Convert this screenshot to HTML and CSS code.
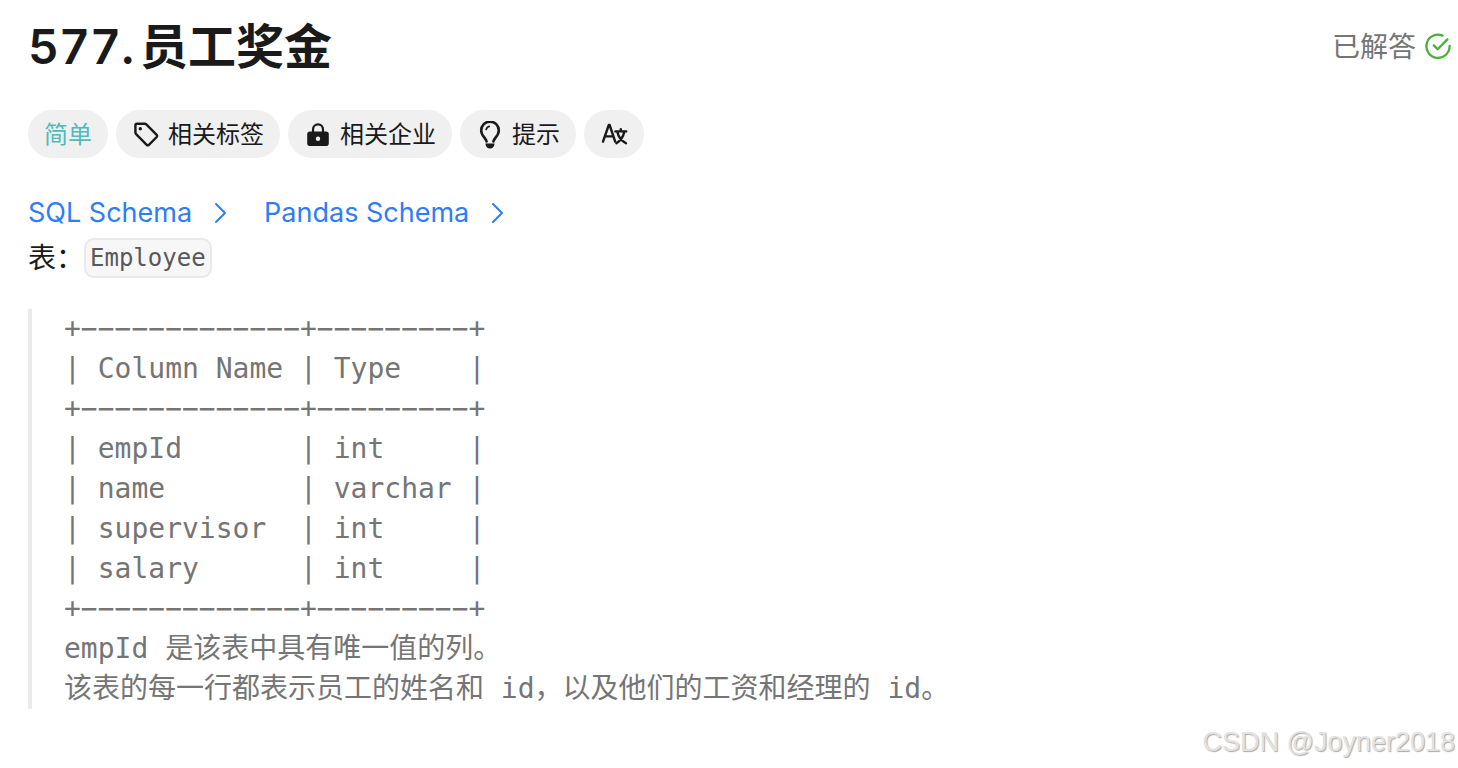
FILE: index.html
```html
<!DOCTYPE html>
<html lang="zh-CN">
<head>
    <meta charset="UTF-8">
    <meta name="viewport" content="width=device-width, initial-scale=1.0">
    <title>577. 员工奖金</title>
    <link rel="stylesheet" href="styles.css">
</head>
<body>
    <main class="problem">
        <header class="header">
            <h1><span>577.</span> <span>员工奖金</span></h1>
            <div class="status">
                <span>已解答</span>
                <svg class="status-icon" viewBox="0 0 28 28" fill="none" stroke="#4caf3c" stroke-width="2.3" stroke-linecap="round" stroke-linejoin="round">
                    <path d="M18.6 2.6A11.6 11.6 0 1 0 25.6 12.8"/>
                    <path d="M9.8 12.4l3.8 3.8L23.4 6.4"/>
                </svg>
            </div>
        </header>

        <div class="tags">
            <span class="tag easy">简单</span>
            <button class="tag" type="button">
                <svg class="tag-icon" viewBox="0 0 28 28" fill="none" stroke="#1a1a1a" stroke-width="2.4" stroke-linejoin="round">
                    <path d="M3.4 4.4q0-1.6 1.6-1.6h7.8q.9 0 1.5.6l10.4 10.4q1 1.1 0 2.2l-7.8 7.8q-1.1 1-2.2 0l-10.6-10.6q-.7-.7-.7-1.6z"/>
                    <circle cx="8.3" cy="7.8" r="1.7" fill="#1a1a1a" stroke="none"/>
                </svg>
                相关标签
            </button>
            <button class="tag" type="button">
                <svg class="tag-icon" viewBox="0 0 28 28">
                    <path d="M9 12V8.4a5 5 0 0 1 10 0V12" fill="none" stroke="#1a1a1a" stroke-width="2.2"/>
                    <path fill="#1a1a1a" fill-rule="evenodd" d="M6 10.6h16a2.8 2.8 0 0 1 2.8 2.8v8.8a2.8 2.8 0 0 1-2.8 2.8H6a2.8 2.8 0 0 1-2.8-2.8v-8.8A2.8 2.8 0 0 1 6 10.6zm8 5a2.2 2.2 0 1 0 0 4.4 2.2 2.2 0 0 0 0-4.4z"/>
                </svg>
                相关企业
            </button>
            <button class="tag" type="button">
                <svg class="tag-icon" viewBox="0 0 28 28" fill="none" stroke="#1a1a1a" stroke-width="2.6" stroke-linecap="round">
                    <path d="M10.6 20.4C10 17.2 5.2 14.8 5.2 9.4a8.8 8.8 0 0 1 17.6 0c0 5.4-4.8 7.8-5.4 11"/>
                    <path d="M10.2 8.4a4.2 4.2 0 0 1 3-3" stroke-width="1.8"/>
                    <path d="M9.4 22.6h9.2q-.6 5-4.6 5T9.4 22.6z" fill="#1a1a1a" stroke="none"/>
                </svg>
                提示
            </button>
            <button class="tag" type="button" aria-label="切换语言">
                <svg class="tag-icon" viewBox="0 0 28 28" fill="none" stroke="#1a1a1a" stroke-width="2.4" stroke-linecap="round" stroke-linejoin="round">
                    <path d="M3 20.6L8.8 4h.8l5.6 16.6M5 15.4h8.4"/>
                    <path d="M15.4 10.4h10.8M20.8 8.2v2M17.4 11c1 5 4.4 9 8.6 11.2M24.2 11c-1 5-4 9-7.8 11.2"/>
                </svg>
            </button>
        </div>

        <nav class="schemas">
            <a href="#">SQL Schema
                <svg class="chevron" viewBox="0 0 14 22" fill="none" stroke="#2f7df6" stroke-width="2" stroke-linecap="round" stroke-linejoin="round"><path d="M2 2l9 9-9 9"/></svg>
            </a>
            <a href="#">Pandas Schema
                <svg class="chevron" viewBox="0 0 14 22" fill="none" stroke="#2f7df6" stroke-width="2" stroke-linecap="round" stroke-linejoin="round"><path d="M2 2l9 9-9 9"/></svg>
            </a>
        </nav>

        <p class="table-name">表：<code>Employee</code></p>

<pre class="schema">
+−−−−−−−−−−−−−+−−−−−−−−−+
| Column Name | Type    |
+−−−−−−−−−−−−−+−−−−−−−−−+
| empId       | int     |
| name        | varchar |
| supervisor  | int     |
| salary      | int     |
+−−−−−−−−−−−−−+−−−−−−−−−+
empId 是该表中具有唯一值的列。
该表的每一行都表示员工的姓名和 id，以及他们的工资和经理的 id。</pre>
    </main>
    <footer class="watermark">CSDN @Joyner2018</footer>
</body>
</html>
```
FILE: styles.css
```css
body {
    margin: 0;
    background-color: #fff;
    color: #1a1a1a;
    font-family: Inter, "Noto Sans CJK SC", sans-serif;
    font-size: 28px;
}
.problem {
    padding: 16px 6px 0 28px;
}
.header {
    display: flex;
    align-items: center;
    justify-content: space-between;
}
h1 {
    display: flex;
    gap: 6px;
    margin: 0;
    font-size: 48px;
    font-weight: 600;
    font-variant-numeric: tabular-nums;
    line-height: 62px;
}
.status {
    display: flex;
    align-items: center;
    gap: 8px;
    color: #757575;
    line-height: 40px;
}
.status-icon {
    width: 28px;
    height: 28px;
}
.tags {
    display: flex;
    gap: 8px;
    margin-top: 32px;
}
.tag {
    display: flex;
    align-items: center;
    gap: 8px;
    box-sizing: border-box;
    height: 48px;
    padding: 2px 16px 0;
    border: none;
    border-radius: 24px;
    background-color: #f0f0f0;
    color: #1a1a1a;
    font-family: inherit;
    font-size: 24px;
    line-height: 48px;
    cursor: pointer;
}
.easy {
    color: #53b9b9;
    cursor: default;
}
.tag-icon {
    width: 28px;
    height: 28px;
}
.schemas {
    display: flex;
    gap: 36px;
    margin-top: 35px;
}
.schemas a {
    display: flex;
    align-items: center;
    gap: 22px;
    color: #2f7df6;
    font-size: 27px;
    line-height: 40px;
    text-decoration: none;
}
.chevron {
    width: 14px;
    height: 22px;
}
.table-name {
    display: flex;
    align-items: center;
    margin: 5px 0 0;
    line-height: 40px;
}
code {
    padding: 0 4px;
    border: 2px solid #e9e9e9;
    border-radius: 10px;
    background-color: #f7f7f7;
    color: #595959;
    font-family: "DejaVu Sans Mono", monospace;
    font-size: 24px;
    line-height: 36px;
}
.schema {
    margin: 31px 0 0;
    padding-left: 32px;
    border-left: 4px solid #ebebeb;
    color: #757575;
    font-family: "DejaVu Sans Mono", "Noto Sans CJK SC", monospace;
    font-size: 28px;
    line-height: 40px;
}
.watermark {
    padding: 13px 3px 0 0;
    color: #e2e2e2;
    font-family: "Liberation Sans", sans-serif;
    font-size: 27px;
    line-height: 40px;
    text-align: right;
    text-shadow: 1px 1px 1px #aaa;
}
```
